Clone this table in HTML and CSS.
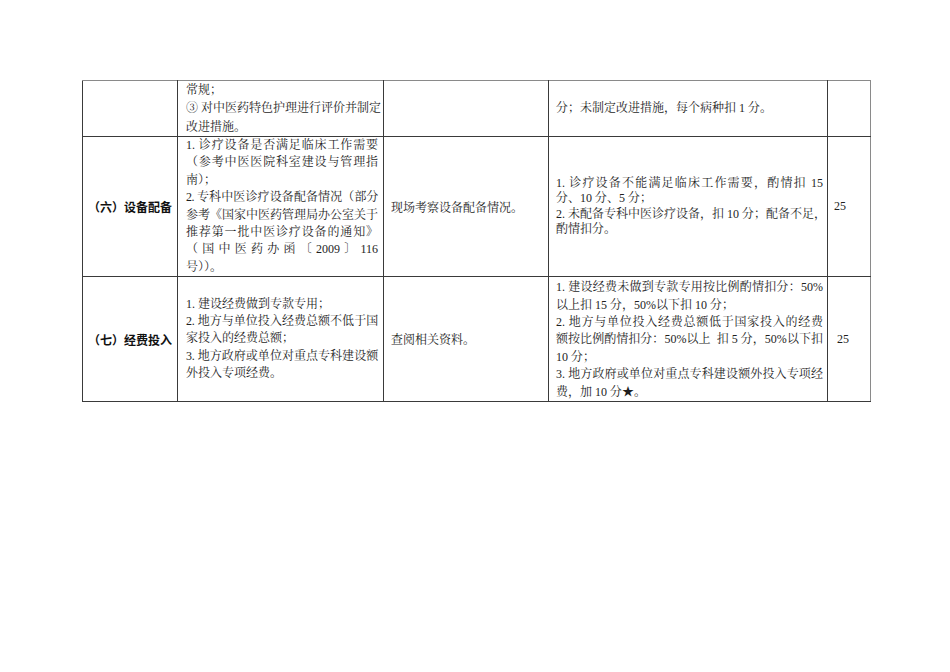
FILE: index.html
```html
<!DOCTYPE html>
<html lang="zh">
<head>
<meta charset="utf-8">
<link rel="stylesheet" href="styles.css">
</head>
<body>
<table class="grid">
  <colgroup>
    <col class="c1"><col class="c2"><col class="c3"><col class="c4"><col class="c5">
  </colgroup>
  <tr class="r1">
    <td class="label"></td>
    <td class="txt top">
      <div>常规；</div>
      <div class="j">③ 对中医药特色护理进行评价并制定</div>
      <div>改进措施。</div>
    </td>
    <td class="plain"></td>
    <td class="txt wide4"><div>分；未制定改进措施，每个病种扣 1 分。</div></td>
    <td class="score"></td>
  </tr>
  <tr class="r2">
    <td class="label">（六）设备配备</td>
    <td class="txt">
      <div class="j">1. 诊疗设备是否满足临床工作需要</div>
      <div class="j">（参考中医医院科室建设与管理指</div>
      <div>南）；</div>
      <div class="j squeeze">2. 专科中医诊疗设备配备情况（部分</div>
      <div class="j">参考《国家中医药管理局办公室关于</div>
      <div class="j">推荐第一批中医诊疗设备的通知》</div>
      <div class="j">（国中医药办函〔2009〕116</div>
      <div>号））。</div>
    </td>
    <td class="plain">现场考察设备配备情况。</td>
    <td class="txt wide4 small">
      <div class="j">1. 诊疗设备不能满足临床工作需要，酌情扣 15</div>
      <div>分、10 分、5 分；</div>
      <div class="j">2. 未配备专科中医诊疗设备，扣 10 分；配备不足，</div>
      <div>酌情扣分。</div>
    </td>
    <td class="score">25</td>
  </tr>
  <tr class="r3">
    <td class="label">（七）经费投入</td>
    <td class="txt">
      <div>1. 建设经费做到专款专用；</div>
      <div class="j slight">2. 地方与单位投入经费总额不低于国</div>
      <div>家投入的经费总额；</div>
      <div class="j slight">3. 地方政府或单位对重点专科建设额</div>
      <div>外投入专项经费。</div>
    </td>
    <td class="plain">查阅相关资料。</td>
    <td class="txt wide4 pad3">
      <div class="j">1. 建设经费未做到专款专用按比例酌情扣分：50%</div>
      <div>以上扣 15 分，50%以下扣 10 分；</div>
      <div class="j">2. 地方与单位投入经费总额低于国家投入的经费</div>
      <div class="j">额按比例酌情扣分：50%以上&nbsp; 扣 5 分，50%以下扣</div>
      <div>10 分；</div>
      <div class="j">3. 地方政府或单位对重点专科建设额外投入专项经</div>
      <div>费，加 10 分★。</div>
    </td>
    <td class="score wide">25</td>
  </tr>
</table>
</body>
</html>
```

FILE: styles.css
```css
html, body {
  margin: 0;
  padding: 0;
  background: #ffffff;
}
body {
  padding: 80px 0 0 82px;
  font-family: "Liberation Serif", "Noto Serif CJK SC", "Noto Sans CJK SC", serif;
  font-size: 12px;
  color: #1e1e1e;
}
.grid {
  border-collapse: collapse;
  table-layout: fixed;
  width: 788px;
}
.c1 { width: 95px; }
.c2 { width: 206px; }
.c3 { width: 165px; }
.c4 { width: 279px; }
.c5 { width: 43px; }
.grid td {
  border: 1px solid #3a3a3a;
  vertical-align: middle;
  padding: 0;
}
.grid tr:first-child td { border-top-color: #8a8a8a; }
.grid td:last-child { border-right-color: #8a8a8a; }
.r1 { height: 55px; }
.r2 { height: 140px; }
.r3 { height: 124px; }
.label {
  text-align: center;
  font-family: "Noto Sans CJK SC", sans-serif;
  font-weight: bold;
  font-size: 12px;
  color: #111;
}
.txt {
  padding: 0 5px 0 8px !important;
  line-height: 17.4px;
  text-align: left;
}
.txt div { white-space: nowrap; }
.txt.top { vertical-align: top !important; line-height: 18.3px; }
.txt .j {
  text-align: justify;
  text-align-last: justify;
}
.txt .squeeze { letter-spacing: -0.6px; }
.txt .slight { letter-spacing: -0.2px; }
.txt.wide4 { padding: 0 4px 0 7px !important; }
.txt.small { line-height: 15.3px; }
.txt.pad3 { padding-top: 2px !important; }
.plain {
  padding-left: 7px !important;
}
.score {
  padding-left: 6px !important;
}
.score.wide { padding-left: 9px !important; }
```
